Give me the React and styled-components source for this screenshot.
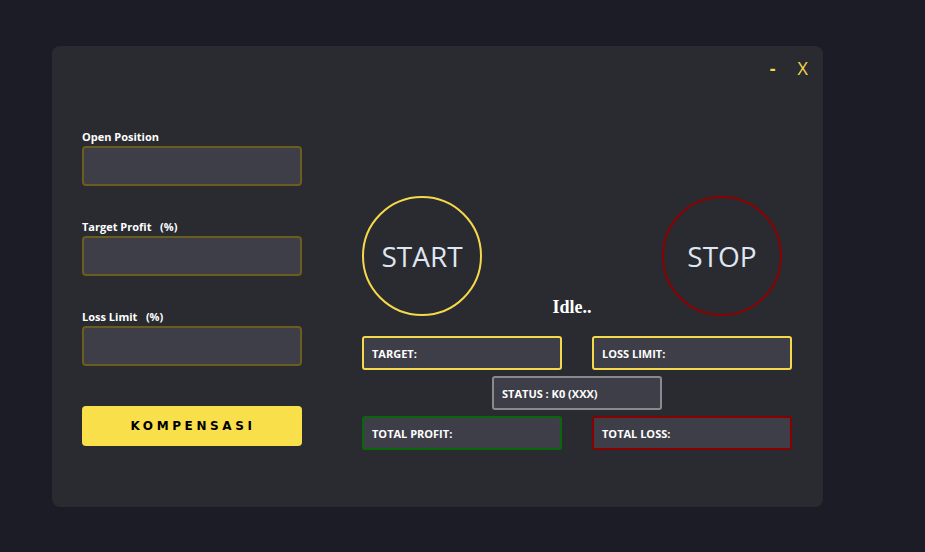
import styled, { createGlobalStyle } from 'styled-components'

const GlobalStyle = createGlobalStyle`
  html, body {
    margin: 0;
    padding: 0;
    background: #1c1c26;
  }
  body {
    font-family: 'Open Sans', 'Liberation Sans', sans-serif;
  }
`

const Page = styled.div`
  width: 925px;
  height: 552px;
  padding: 46px 0 0 52px;
  box-sizing: border-box;
  background: #1c1c26;
`

const Window = styled.div`
  width: 771px;
  height: 461px;
  background: #2a2b31;
  border-radius: 8px;
  display: flex;
  flex-direction: column;
`

const TitleBar = styled.div`
  height: 40px;
  display: flex;
  justify-content: flex-end;
  align-items: center;
  gap: 22px;
  padding: 4px 15px 0 0;
  box-sizing: border-box;
`

const WinButton = styled.span`
  color: #f5d94b;
  font-family: 'Open Sans', sans-serif;
  font-weight: ${p => (p.$bold ? 700 : 400)};
  font-size: 18px;
  line-height: 20px;
  cursor: pointer;
`

const Body = styled.div`
  display: flex;
  padding: 43px 30px 0 30px;
`

const Form = styled.div`
  width: 220px;
  display: flex;
  flex-direction: column;
  gap: 33px;
`

const Field = styled.div`
  display: flex;
  flex-direction: column;
  gap: 2px;
`

const Label = styled.label`
  color: #ffffff;
  font-size: 11px;
  font-weight: 700;
  line-height: 15px;
  white-space: pre;
`

const Input = styled.input`
  height: 40px;
  box-sizing: border-box;
  background: #3e3e48;
  border: 2px solid #6a5d1d;
  border-radius: 4px;
  outline: none;
  color: #fff;
  padding: 0 8px;
`

const Compensate = styled.button`
  margin-top: 7px;
  height: 40px;
  border: none;
  border-radius: 4px;
  background: #f9df4a;
  color: #000;
  font-family: 'DejaVu Sans', sans-serif;
  font-weight: 700;
  font-size: 12px;
  letter-spacing: 3.6px;
  padding-left: 8px;
  cursor: pointer;
`

const Control = styled.div`
  margin: 67px 0 0 60px;
  width: 430px;
  display: flex;
  flex-direction: column;
`

const CircleRow = styled.div`
  width: 420px;
  display: flex;
  justify-content: space-between;
  align-items: flex-end;
`

const Circle = styled.div`
  width: 120px;
  height: 120px;
  box-sizing: border-box;
  border-radius: 50%;
  border: 2px solid ${p => p.$color};
  display: flex;
  align-items: center;
  justify-content: center;
  color: #dfe6f2;
  font-family: 'Open Sans', sans-serif;
  font-size: 28px;
  cursor: pointer;
`

const Status = styled.div`
  color: #ffffff;
  font-family: 'Liberation Serif', serif;
  font-weight: 700;
  font-size: 18px;
  line-height: 20px;
  margin-bottom: -1px;
`

const Grid = styled.div`
  margin-top: 20px;
  display: flex;
  flex-direction: column;
  gap: 6px;
`

const Row = styled.div`
  display: flex;
  justify-content: ${p => (p.$center ? 'center' : 'space-between')};
`

const Box = styled.div`
  width: ${p => p.$width || 200}px;
  height: 34px;
  box-sizing: border-box;
  background: #3e3e48;
  border: 2px solid ${p => p.$color};
  border-radius: 3px;
  display: flex;
  align-items: center;
  padding-left: 8px;
  color: #ffffff;
  font-size: 11px;
  font-weight: 700;
`

export default function App() {
  return (
    <Page>
      <GlobalStyle />
      <Window>
        <TitleBar>
          <WinButton $bold>-</WinButton>
          <WinButton>X</WinButton>
        </TitleBar>
        <Body>
          <Form>
            <Field>
              <Label>Open Position</Label>
              <Input />
            </Field>
            <Field>
              <Label>Target Profit   (%)</Label>
              <Input />
            </Field>
            <Field>
              <Label>Loss Limit   (%)</Label>
              <Input />
            </Field>
            <Compensate>KOMPENSASI</Compensate>
          </Form>
          <Control>
            <CircleRow>
              <Circle $color="#f5d94b">START</Circle>
              <Status>Idle..</Status>
              <Circle $color="#8b0000">STOP</Circle>
            </CircleRow>
            <Grid>
              <Row>
                <Box $color="#f5d94b">TARGET:</Box>
                <Box $color="#f5d94b">LOSS LIMIT:</Box>
              </Row>
              <Row $center>
                <Box $color="#8a8a8e" $width={170}>STATUS : K0 (XXX)</Box>
              </Row>
              <Row>
                <Box $color="#0a660a">TOTAL PROFIT:</Box>
                <Box $color="#880000">TOTAL LOSS:</Box>
              </Row>
            </Grid>
          </Control>
        </Body>
      </Window>
    </Page>
  )
}
